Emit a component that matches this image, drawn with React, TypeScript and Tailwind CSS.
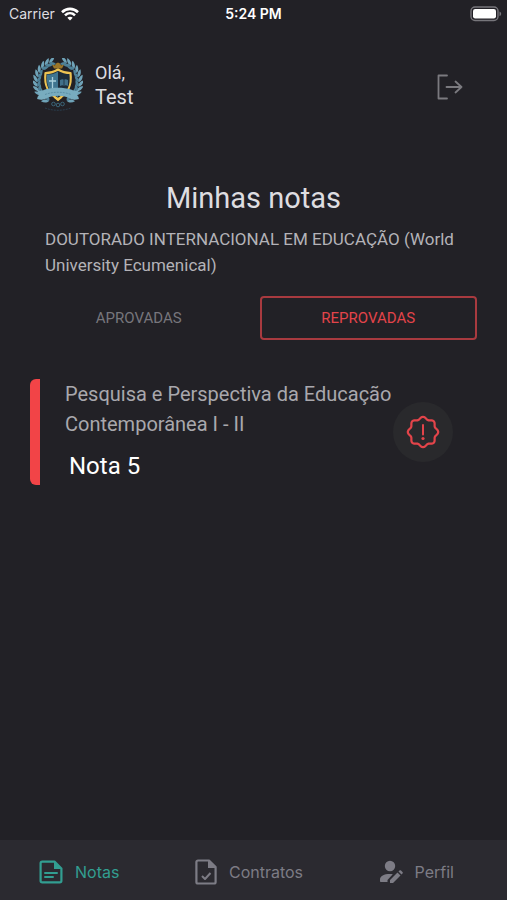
import type { ReactNode } from "react"

const navItems = [
  { name: "Notas", icon: <NotesIcon />, active: true },
  { name: "Contratos", icon: <ContractIcon />, active: false },
  { name: "Perfil", icon: <ProfileIcon />, active: false },
]

const grades = [
  { subject: "Pesquisa e Perspectiva da Educação Contemporânea I - II", grade: 5 },
]

// Eight-lobed outline around the centre of a 34x34 box
const badgePoints = Array.from({ length: 96 }, (_, i) => {
  const angle = (i / 96) * Math.PI * 2
  const radius = 14 + 1.2 * Math.cos(angle * 8)
  return `${(17 + radius * Math.cos(angle)).toFixed(2)},${(17 + radius * Math.sin(angle)).toFixed(2)}`
}).join(" ")

// Leaf pairs up the left branch of the wreath
const leaves = Array.from({ length: 11 }, (_, i) => {
  const angle = 118 + i * 13
  const rad = (angle * Math.PI) / 180
  return { x: 25 + 21 * Math.cos(rad), y: 24 + 21 * Math.sin(rad), angle: angle + 90 }
})

function WifiIcon() {
  return (
    <svg width="18" height="14" viewBox="0 0 18 14" fill="none" stroke="#fff" strokeWidth="2.6">
      <path d="M1 5.2C5.6.8 12.4.8 17 5.2" />
      <path d="M4 8.4c2.9-2.8 7.100-2.800 10 0" />
      <path d="M9 13.600 6.300 10.800c1.500-1.500 3.900-1.500 5.400 0z" fill="#fff" stroke="none" />
    </svg>
  )
}

function BatteryIcon() {
  return (
    <svg width="32" height="16" viewBox="0 0 32 16" fill="none">
      <rect x="1" y="1" width="27" height="13.500" rx="4" stroke="#77767b" strokeWidth="1.400" />
      <rect x="3" y="3" width="23" height="9.500" rx="2.200" fill="#fff" />
      <path d="M29.500 5.500c2.200.8 2.200 3.800 0 4.600z" fill="#77767b" />
    </svg>
  )
}

function Crest() {
  return (
    <svg width="50" height="54" viewBox="0 0 50 54" role="img" aria-label="World University Ecumenical">
      {[1, -1].map((side) => (
        <g key={side} transform={side === 1 ? undefined : "translate(50 0) scale(-1 1)"}>
          {leaves.map((leaf) => (
            <g key={leaf.angle} transform={`translate(${leaf.x} ${leaf.y}) rotate(${leaf.angle})`}>
              <path d="M-1 0C0-3 3-4 6-4 5-1 2 1-1 0z" fill="#6fa3b8" />
              <path d="M-1 0C1-1 4 1 5 4 2 4-1 3-1 0z" fill="#4f8299" />
            </g>
          ))}
        </g>
      ))}
      <path d="M25 11c4 2.500 8 3.500 13 3.500 1.500 13-2 21-13 26.500-11-5.500-14.500-13.500-13-26.500 5 0 9-1 13-3.500z" fill="#1c2b39" stroke="#222126" strokeWidth="5" />
      <path d="m21 10.500-2-4 3 1 1-2 2-1 2 1 1 2 3-1-2 4z" fill="#9c7628" />
      <path d="M25 11.500c4 2.500 8 3.500 12.500 3.500 1.500 12.500-2 20.500-12.500 26-10.500-5.500-14-13.500-12.500-26 4.500 0 8.500-1 12.500-3.500z" fill="#1c2b39" stroke="#edc352" strokeWidth="2.200" strokeLinejoin="round" />
      <path d="M25 13.500v26c-8-5-12-11-11-23 4 0 7.500-.5 11-3z" fill="#3f7590" />
      <path d="M19.500 19v12M16 23h7" stroke="#a9cfdb" strokeWidth="1.300" />
      <path d="M27 22c2-1 3-1 4 0 1-1 2-1 4 0v6c-2-1-3-1-4 0-1-1-2-1-4 0z" fill="#41708a" />
      <path d="M31 22v6" stroke="#1c2b39" strokeWidth=".8" />
      <path d="M4 32c3 1 5 1 8-.500 8-2.500 18-2.500 26 0 3 1.500 5 1.500 8 .500l-2 4.500 2 4.500c-4 1-7 1-10-1-7-3-15-3-22 0-3 2-6 2-10 1l2-4.500z" fill="#78acbf" />
      <path d="M12 36.500c8-3 18-3 26 0" fill="none" stroke="#5b8fa5" strokeDasharray="2 1" />
      <path d="m21.500 39 3.500 3 3.500-3" fill="none" stroke="#edc352" strokeWidth="1.800" />
      <g fill="none" stroke="#3b6579">
        <circle cx="20.500" cy="46" r="1.800" />
        <circle cx="25" cy="47" r="1.800" />
        <circle cx="29.500" cy="46" r="1.800" />
        <path d="M12 50c8 3 18 3 26 0" stroke="#293d4d" strokeDasharray="2 1" />
      </g>
    </svg>
  )
}

function LogoutIcon() {
  return (
    <svg width="26" height="26" viewBox="0 0 26 26" fill="none" stroke="#7b7a7f" strokeWidth="1.800" strokeLinecap="round" strokeLinejoin="round">
      <path d="M10 1.500H1.500v23H10M9.500 13H24.500M18.500 7.500l6 5.500-6 5.500" />
    </svg>
  )
}

function NotesIcon() {
  return (
    <svg width="24" height="24" viewBox="0 0 24 24" fill="none" stroke="currentColor" strokeWidth="2.200" strokeLinejoin="round">
      <path d="M15.500 1.600H3.200c-.9 0-1.600.7-1.600 1.600v17.600c0 .9.7 1.600 1.600 1.600h17.600c.9 0 1.600-.7 1.600-1.600V8.500z" />
      <path d="M15 1.600V9h7.400z" fill="currentColor" stroke="none" />
      <path d="M6 13h12M6 17h8" strokeLinecap="round" strokeWidth="2" />
    </svg>
  )
}

function ContractIcon() {
  return (
    <svg width="22" height="26" viewBox="0 0 22 26" fill="none" stroke="currentColor" strokeWidth="2.200" strokeLinejoin="round">
      <path d="M14 1.500H3c-.9 0-1.600.7-1.600 1.600v19.800c0 .9.700 1.600 1.600 1.600h16c.9 0 1.600-.7 1.600-1.600V8z" />
      <path d="M13 1.500V9h7.600V8z" fill="currentColor" stroke="none" />
      <path d="m7 17 3 3 5.500-6" strokeWidth="2" />
    </svg>
  )
}

function ProfileIcon() {
  return (
    <svg width="24" height="24" viewBox="0 0 24 24" fill="currentColor">
      <circle cx="11" cy="6" r="5.200" />
      <path d="M1 21v-1.500C1 16 5 14 11 14c1 0 2 .1 2.800.3L8.500 20v2H2c-.6 0-1-.4-1-1z" />
      <path d="m11 20 7.500-7.500 3 3L14 23h-3zM19.500 11.500l1-1c.5-.5 1-.5 1.500 0l1.500 1.500c.5.5.5 1 0 1.500l-1 1z" />
    </svg>
  )
}

function BadgeIcon() {
  return (
    <svg width="34" height="34" viewBox="0 0 34 34" fill="none" stroke="#e3444a" strokeWidth="2.200">
      <polygon points={badgePoints} strokeLinejoin="round" />
      <path d="M17 10v9.500" strokeWidth="2" strokeLinecap="round" />
      <circle cx="17" cy="23.500" r="1.600" fill="#e3444a" stroke="none" />
    </svg>
  )
}

function NavLink({ active, icon, children }: { active: boolean; icon: ReactNode; children: ReactNode }) {
  return (
    <a
      href="#"
      aria-current={active ? "page" : undefined}
      className={active ? "flex items-center gap-3 text-[#329e91]" : "flex items-center gap-3 text-[#7d7c85]"}
    >
      {icon}
      <span>{children}</span>
    </a>
  )
}

export default function App() {
  return (
    <div className="flex min-h-screen flex-col bg-[#222126] font-['Roboto',sans-serif] text-[#dedde0]">
      <div className="grid h-7 grid-cols-3 items-center font-['Inter',sans-serif] text-sm text-white">
        <div className="flex items-center gap-1.5 pl-[9px] text-[#dedde0]">
          <span>Carrier</span>
          <WifiIcon />
        </div>
        <span className="text-center text-sm font-semibold">5:24 PM</span>
        <div className="flex justify-end pr-[5px]">
          <BatteryIcon />
        </div>
      </div>

      <header className="flex items-center justify-between pt-[30px] pr-11 pl-[33px]">
        <div className="flex items-center gap-3">
          <Crest />
          <div>
            <p className="text-lg leading-6">Olá,</p>
            <p className="text-xl leading-6">Test</p>
          </div>
        </div>
        <button type="button" aria-label="Sair" className="pt-1">
          <LogoutIcon />
        </button>
      </header>

      <main className="flex-1 px-[30px] pt-[66px]">
        <h1 className="text-center text-[29px] leading-10">Minhas notas</h1>
        <p className="mt-2 pr-3 pl-[15px] text-[17px] leading-[26px] text-[#b4b3b8]">
          DOUTORADO INTERNACIONAL EM EDUCAÇÃO (World University Ecumenical)
        </p>

        <div className="mt-[18px] grid grid-cols-2 gap-3 text-[15px]">
          <button type="button" className="h-11 rounded text-[#77767c]">APROVADAS</button>
          <button type="button" className="h-11 rounded border-2 border-[#a83a3f] text-[#e3444a]">REPROVADAS</button>
        </div>

        {grades.map((item) => (
          <article key={item.subject} className="mt-[39px] flex">
            <div className="w-[10px] rounded-l-md bg-[#f24447]" />
            <div className="flex-1 pl-[25px]">
              <h2 className="text-xl leading-[30px] text-[#a9a8ad]">{item.subject}</h2>
              <p className="mt-2 pl-1 text-2xl leading-[38px] text-white">Nota {item.grade}</p>
            </div>
            <div className="mr-6 flex size-[60px] shrink-0 items-center justify-center self-center rounded-full bg-[#29292c]">
              <BadgeIcon />
            </div>
          </article>
        ))}
      </main>

      <nav className="sticky bottom-0 flex h-[60px] items-center justify-between bg-[#2b2a30] pt-1 pr-[53px] pl-[39px] font-['Inter',sans-serif] text-base">
        {navItems.map((item) => (
          <NavLink key={item.name} active={item.active} icon={item.icon}>
            {item.name}
          </NavLink>
        ))}
      </nav>
    </div>
  )
}
